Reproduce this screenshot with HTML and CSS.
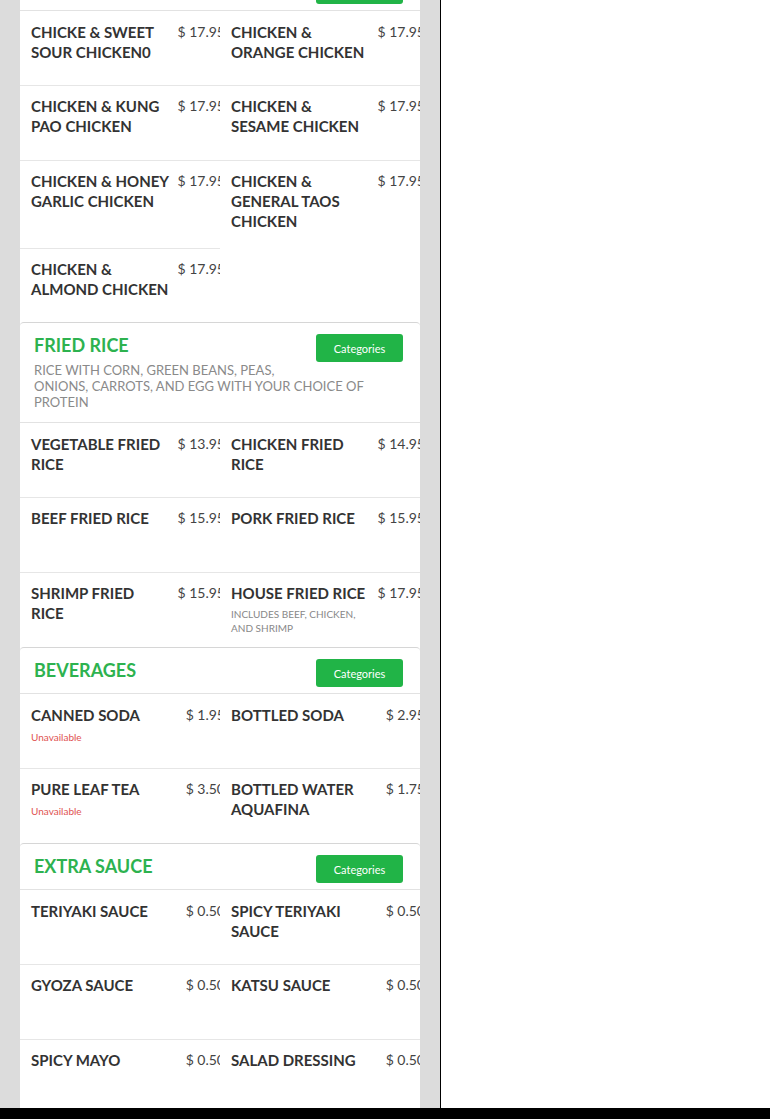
FILE: index.html
```html
<!DOCTYPE html>
<html lang="en">
<head>
    <meta charset="UTF-8">
    <meta name="viewport" content="width=device-width, initial-scale=1.0">
    <title>Menu</title>
    <link rel="stylesheet" href="styles.css">
</head>
<body>
    <div class="screen">
        <div class="phone">
            <div class="menu">

                <div class="section section-first">
                    <div class="section-head">
                        <div class="head-row">
                            <h2 class="section-title">CHICKEN</h2>
                            <button class="cat-button">Categories</button>
                        </div>
                    </div>
                    <div class="items">
                        <div class="item">
                            <div class="item-info"><div class="item-name">CHICKE &amp; SWEET SOUR CHICKEN0</div></div>
                            <div class="item-price">$ 17.95</div>
                        </div>
                        <div class="item">
                            <div class="item-info"><div class="item-name">CHICKEN &amp; ORANGE CHICKEN</div></div>
                            <div class="item-price">$ 17.95</div>
                        </div>
                        <div class="item">
                            <div class="item-info"><div class="item-name">CHICKEN &amp; KUNG PAO CHICKEN</div></div>
                            <div class="item-price">$ 17.95</div>
                        </div>
                        <div class="item">
                            <div class="item-info"><div class="item-name">CHICKEN &amp; SESAME CHICKEN</div></div>
                            <div class="item-price">$ 17.95</div>
                        </div>
                        <div class="item">
                            <div class="item-info"><div class="item-name">CHICKEN &amp; HONEY GARLIC CHICKEN</div></div>
                            <div class="item-price">$ 17.95</div>
                        </div>
                        <div class="item">
                            <div class="item-info"><div class="item-name">CHICKEN &amp; GENERAL TAOS CHICKEN</div></div>
                            <div class="item-price">$ 17.95</div>
                        </div>
                        <div class="item item-last">
                            <div class="item-info"><div class="item-name">CHICKEN &amp; ALMOND CHICKEN</div></div>
                            <div class="item-price">$ 17.95</div>
                        </div>
                    </div>
                </div>

                <div class="section">
                    <div class="section-head">
                        <div class="head-row">
                            <h2 class="section-title">FRIED RICE</h2>
                            <button class="cat-button">Categories</button>
                        </div>
                        <p class="section-desc">Rice with corn, green beans, peas,<br>onions, carrots, and egg with your choice of protein</p>
                    </div>
                    <div class="items">
                        <div class="item">
                            <div class="item-info"><div class="item-name">VEGETABLE FRIED RICE</div></div>
                            <div class="item-price">$ 13.95</div>
                        </div>
                        <div class="item">
                            <div class="item-info"><div class="item-name">CHICKEN FRIED RICE</div></div>
                            <div class="item-price">$ 14.95</div>
                        </div>
                        <div class="item">
                            <div class="item-info"><div class="item-name">BEEF FRIED RICE</div></div>
                            <div class="item-price">$ 15.95</div>
                        </div>
                        <div class="item">
                            <div class="item-info"><div class="item-name">PORK FRIED RICE</div></div>
                            <div class="item-price">$ 15.95</div>
                        </div>
                        <div class="item">
                            <div class="item-info"><div class="item-name">SHRIMP FRIED<br>RICE</div></div>
                            <div class="item-price">$ 15.95</div>
                        </div>
                        <div class="item">
                            <div class="item-info">
                                <div class="item-name">HOUSE FRIED RICE</div>
                                <div class="item-desc">Includes beef, chicken, and shrimp</div>
                            </div>
                            <div class="item-price">$ 17.95</div>
                        </div>
                    </div>
                </div>

                <div class="section">
                    <div class="section-head">
                        <div class="head-row">
                            <h2 class="section-title">BEVERAGES</h2>
                            <button class="cat-button">Categories</button>
                        </div>
                    </div>
                    <div class="items">
                        <div class="item">
                            <div class="item-info">
                                <div class="item-name">CANNED SODA</div>
                                <div class="item-status">Unavailable</div>
                            </div>
                            <div class="item-price">$ 1.95</div>
                        </div>
                        <div class="item">
                            <div class="item-info"><div class="item-name">BOTTLED SODA</div></div>
                            <div class="item-price">$ 2.95</div>
                        </div>
                        <div class="item">
                            <div class="item-info">
                                <div class="item-name">PURE LEAF TEA</div>
                                <div class="item-status">Unavailable</div>
                            </div>
                            <div class="item-price">$ 3.50</div>
                        </div>
                        <div class="item">
                            <div class="item-info"><div class="item-name">BOTTLED WATER AQUAFINA</div></div>
                            <div class="item-price">$ 1.75</div>
                        </div>
                    </div>
                </div>

                <div class="section">
                    <div class="section-head">
                        <div class="head-row">
                            <h2 class="section-title">EXTRA SAUCE</h2>
                            <button class="cat-button">Categories</button>
                        </div>
                    </div>
                    <div class="items">
                        <div class="item">
                            <div class="item-info"><div class="item-name">TERIYAKI SAUCE</div></div>
                            <div class="item-price">$ 0.50</div>
                        </div>
                        <div class="item">
                            <div class="item-info"><div class="item-name">SPICY TERIYAKI SAUCE</div></div>
                            <div class="item-price">$ 0.50</div>
                        </div>
                        <div class="item">
                            <div class="item-info"><div class="item-name">GYOZA SAUCE</div></div>
                            <div class="item-price">$ 0.50</div>
                        </div>
                        <div class="item">
                            <div class="item-info"><div class="item-name">KATSU SAUCE</div></div>
                            <div class="item-price">$ 0.50</div>
                        </div>
                        <div class="item">
                            <div class="item-info"><div class="item-name">SPICY MAYO</div></div>
                            <div class="item-price">$ 0.50</div>
                        </div>
                        <div class="item">
                            <div class="item-info"><div class="item-name">SALAD DRESSING</div></div>
                            <div class="item-price">$ 0.50</div>
                        </div>
                    </div>
                </div>

            </div>
        </div>
        <div class="blank"></div>
    </div>
    <div class="bottom-bar"></div>
</body>
</html>
```

FILE: styles.css
```css
* {
    box-sizing: border-box;
}
html, body {
    margin: 0;
    height: 100%;
}
body {
    font-family: Lato, "Open Sans", Arial, sans-serif;
    background: #fff;
    display: flex;
    flex-direction: column;
    overflow: hidden;
}
.screen {
    flex: 1;
    display: flex;
    overflow: hidden;
    min-height: 0;
}
.phone {
    width: 441px;
    flex: none;
    padding: 0 20px;
    background-color: #dcdcdc;
    border-right: 1px solid #000;
}
.blank {
    flex: 1;
    background: #fff;
}
.bottom-bar {
    height: 11px;
    flex: none;
    background: #000;
}
.menu {
    background: #fff;
    margin-top: -36px;
    padding-bottom: 40px;
}
.section {
    border-top: 1px solid #d6d6d6;
    border-radius: 4px 4px 0 0;
}
.section-head {
    padding: 11px 17px 6px 14px;
    border-bottom: 1px solid #e2e2e2;
}
.head-row {
    display: flex;
    justify-content: space-between;
    align-items: flex-start;
}
.section-title {
    margin: 0;
    color: #2db24f;
    font-size: 18px;
    font-weight: 700;
    line-height: 22px;
}
.cat-button {
    width: 87px;
    height: 28px;
    border: none;
    border-radius: 3px;
    background-color: #21b447;
    color: #fff;
    font-family: Lato, Arial, sans-serif;
    font-size: 11px;
    padding: 0;
    cursor: pointer;
}
.section-desc {
    margin: 0 0 6px;
    color: #8a8a8a;
    font-size: 13px;
    line-height: 16px;
    text-transform: uppercase;
}
.items {
    display: grid;
    grid-template-columns: 1fr 1fr;
}
.item {
    display: flex;
    align-items: flex-start;
    min-height: 75px;
    padding: 10px 0 12px 11px;
    border-top: 1px solid #e6e6e6;
    overflow: hidden;
}
.items .item:nth-child(-n+2) {
    border-top: none;
    min-height: 74px;
    padding-top: 11px;
}
.item-last {
    min-height: 74px;
}
.item-info {
    flex: 1;
    min-width: 0;
}
.item-name {
    color: #333;
    font-size: 15px;
    font-weight: 700;
    line-height: 20px;
    margin-bottom: 5px;
}
.item-desc {
    color: #888;
    font-size: 10px;
    line-height: 13.5px;
    text-transform: uppercase;
}
.item-status {
    color: #e05252;
    font-size: 10px;
    line-height: 14px;
}
.item-price {
    flex: none;
    width: 48px;
    margin: 0 -5px 0 6px;
    color: #444;
    font-size: 14px;
    line-height: 20px;
    text-align: right;
    white-space: nowrap;
}
```
